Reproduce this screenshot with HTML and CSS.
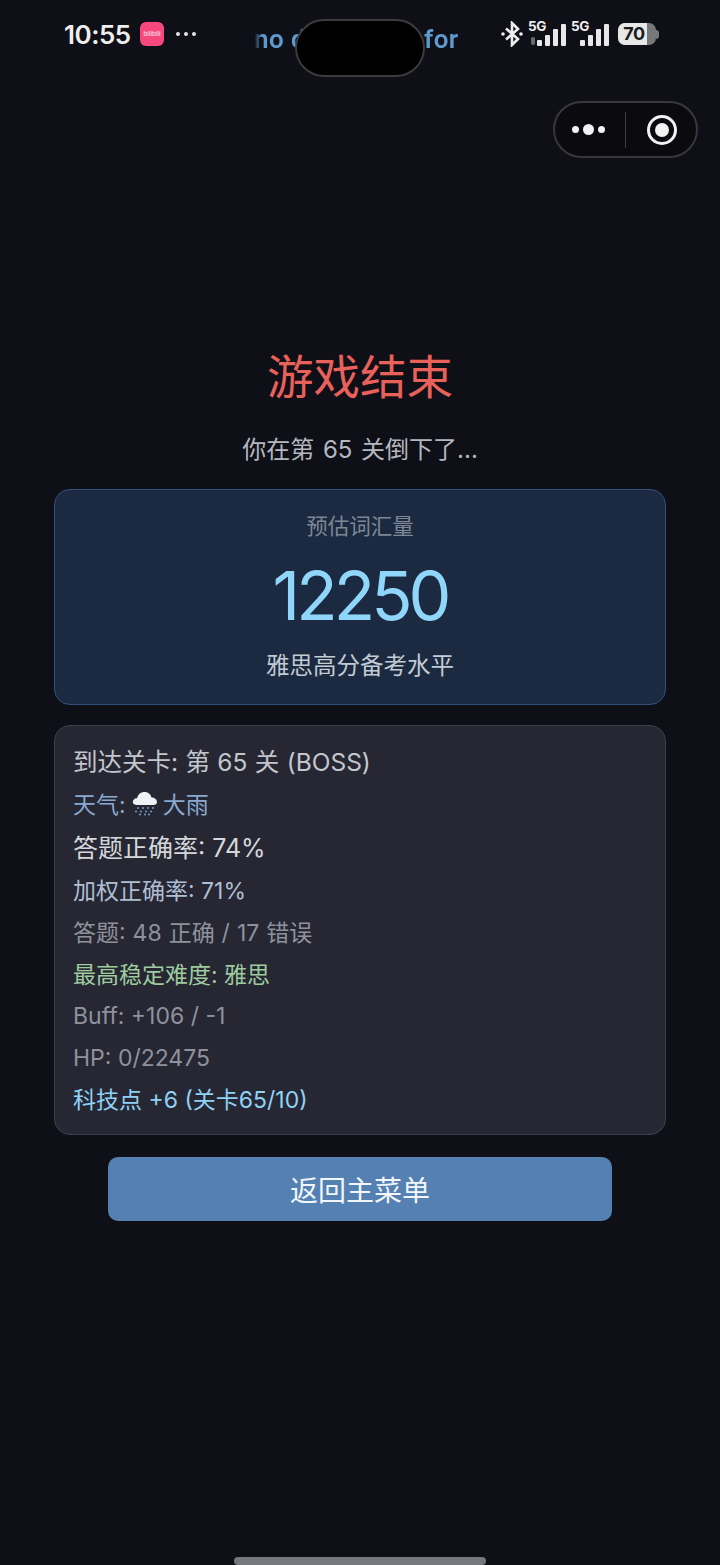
FILE: index.html
```html
<!DOCTYPE html>
<html lang="en">
<head>
    <meta charset="UTF-8">
    <meta name="viewport" content="width=device-width, initial-scale=1.0">
    <title>游戏结束</title>
    <link rel="stylesheet" href="styles.css">
</head>
<body>
    <div class="phone">
        <div class="status-bar">
            <span class="time">10:55</span>
            <span class="app-badge">bilibili</span>
            <span class="more-dots">
                <i></i><i></i><i></i>
            </span>
            <div class="ticker">no <span class="ticker-rest">download for you</span></div>
            <div class="status-icons">
                <svg class="bt-icon" width="24" height="26" viewBox="0 0 24 26">
                    <path d="M6 7.500 L18 18 L12 24 V2 L18 8 L6 18.500" fill="none" stroke="#eeeeee" stroke-width="2.600"/>
                    <circle cx="3" cy="13" r="1.800" fill="#eeeeee"/>
                    <circle cx="21" cy="13" r="1.800" fill="#eeeeee"/>
                </svg>
                <div class="signal">
                    <span class="net-label">5G</span>
                    <span class="updown"></span>
                    <span class="bars"><i class="b1"></i><i class="b2"></i><i class="b3"></i><i class="b4"></i></span>
                </div>
                <div class="signal">
                    <span class="net-label">5G</span>
                    <span class="bars"><i class="b1"></i><i class="b2"></i><i class="b3"></i><i class="b4"></i></span>
                </div>
                <div class="battery">
                    <div class="battery-body"><div class="battery-fill"></div><span>70</span></div>
                    <div class="battery-tip"></div>
                </div>
            </div>
        </div>
        <div class="island"></div>

        <div class="capsule">
            <div class="capsule-dots"><i></i><i class="big"></i><i></i></div>
            <div class="capsule-line"></div>
            <div class="capsule-target"><i></i></div>
        </div>

        <main class="content">
            <h1 class="title">游戏结束</h1>
            <p class="subtitle">你在第 65 关倒下了...</p>

            <section class="vocab-card">
                <div class="vocab-label">预估词汇量</div>
                <div class="vocab-number">12250</div>
                <div class="vocab-level">雅思高分备考水平</div>
            </section>

            <section class="stats-card">
                <div class="row row-main">到达关卡: 第 65 关 (BOSS)</div>
                <div class="row row-weather">
                    <span>天气:</span>
                    <svg class="rain-icon" width="27" height="26" viewBox="0 0 27 26">
                        <path d="M6 15 C2 15 1 12 2.500 10 C3.500 8.500 5 8 6 8.500 C7 4 10 2 13.500 2 C17.500 2 20 4.500 20.500 7.500 C23.500 7.500 26 9.500 26 12 C26 14 24.500 15 22.500 15 Z" fill="#eef1f5"/>
                        <g fill="#6f9fd0">
                            <circle cx="7" cy="18" r="1"/><circle cx="12" cy="18" r="1"/><circle cx="17" cy="18" r="1"/><circle cx="22" cy="18" r="1"/>
                            <circle cx="5" cy="21.500" r="1"/><circle cx="10" cy="21.500" r="1"/><circle cx="15" cy="21.500" r="1"/><circle cx="20" cy="21.500" r="1"/>
                            <circle cx="9" cy="24.500" r="1"/><circle cx="14" cy="24.500" r="1"/><circle cx="18" cy="24.500" r="1"/>
                        </g>
                    </svg>
                    <span>大雨</span>
                </div>
                <div class="row row-accuracy">答题正确率: 74%</div>
                <div class="row row-weighted">加权正确率: 71%</div>
                <div class="row row-muted row-answers">答题: 48 正确 / 17 错误</div>
                <div class="row row-green">最高稳定难度: 雅思</div>
                <div class="row row-muted row-latin">Buff: +106 / -1</div>
                <div class="row row-muted row-latin">HP: 0/22475</div>
                <div class="row row-tech">科技点 +6 (关卡65/10)</div>
            </section>

            <button class="back-btn" type="button">返回主菜单</button>
        </main>

        <div class="home-bar"></div>
    </div>
</body>
</html>
```

FILE: styles.css
```css
* {
    box-sizing: border-box;
}
html, body {
    margin: 0;
    padding: 0;
}
body {
    background-color: #0e0f17;
    font-family: Inter, "Noto Sans CJK SC", "Noto Sans", sans-serif;
    color: #c9ccd4;
}
.phone {
    position: relative;
    width: 720px;
    height: 1565px;
    overflow: hidden;
}

/* status bar */
.status-bar {
    display: flex;
    align-items: center;
    height: 68px;
    padding-left: 64px;
}
.time {
    font-size: 26px;
    font-weight: 600;
    letter-spacing: -0.5px;
    color: #eeeeee;
    width: 76px;
}
.app-badge {
    width: 24px;
    height: 24px;
    margin-right: 12px;
    border-radius: 6px;
    background-color: #f5487f;
    color: #ffe6ee;
    font-family: "Liberation Sans", sans-serif;
    font-size: 7px;
    line-height: 24px;
    text-align: center;
    overflow: hidden;
}
.more-dots {
    display: flex;
    gap: 4px;
    width: 78px;
}
.more-dots i {
    width: 4px;
    height: 4px;
    border-radius: 50%;
    background-color: #e4e4e4;
}
.ticker {
    width: 216px;
    margin-top: 10px;
    overflow: hidden;
    white-space: nowrap;
    font-family: Roboto, "Liberation Sans", sans-serif;
    font-size: 26px;
    font-weight: 600;
    letter-spacing: 0.400px;
    color: #5d9acb;
    -webkit-mask-image: linear-gradient(to right, transparent, #000 8px, #000 206px, transparent);
    mask-image: linear-gradient(to right, transparent, #000 8px, #000 206px, transparent);
}
.ticker-rest {
    word-spacing: 10px;
}
.status-icons {
    display: flex;
    align-items: center;
    margin-left: 30px;
}
.bt-icon {
    margin-right: 4px;
}
.signal {
    position: relative;
    width: 38px;
    height: 24px;
    margin-right: 5px;
}
.net-label {
    position: absolute;
    left: 0;
    top: -4px;
    font-size: 13.500px;
    font-weight: 700;
    letter-spacing: -0.5px;
    color: #eeeeee;
}
.updown {
    position: absolute;
    left: 3px;
    bottom: 1px;
    width: 4px;
    height: 8px;
    background-color: #6a6b71;
    border-radius: 2px;
}
.bars {
    position: absolute;
    right: 0;
    bottom: 0;
    display: flex;
    align-items: flex-end;
    gap: 3px;
}
.bars i {
    width: 5px;
    background-color: #e8e8e8;
    border-radius: 1px;
}
.bars .b1 { height: 6px; }
.bars .b2 { height: 11px; }
.bars .b3 { height: 17px; }
.bars .b4 { height: 22px; }
.battery {
    display: flex;
    align-items: center;
    margin-left: 4px;
}
.battery-body {
    position: relative;
    width: 38px;
    height: 22px;
    border-radius: 7px;
    background-color: #77787c;
    overflow: hidden;
}
.battery-fill {
    width: 76%;
    height: 100%;
    background-color: #e8e8e8;
}
.battery-body span {
    position: absolute;
    left: 0;
    right: 6px;
    top: 0;
    font-size: 18px;
    font-weight: 700;
    line-height: 22px;
    letter-spacing: -0.5px;
    text-align: center;
    color: #1b1b1f;
}
.battery-tip {
    width: 3px;
    height: 9px;
    border-radius: 0 3px 3px 0;
    background-color: #77787c;
}

/* camera cutout, sits over the ticker */
.island {
    position: absolute;
    left: 295px;
    top: 19px;
    width: 130px;
    height: 58px;
    border-radius: 29px;
    background-color: #000000;
    border: 2px solid #3a3a40;
}

/* mini program capsule */
.capsule {
    position: absolute;
    left: 553px;
    top: 101px;
    width: 145px;
    height: 57px;
    display: flex;
    align-items: center;
    border-radius: 29px;
    background-color: #0a0a0f;
    border: 2px solid #37373d;
}
.capsule-dots {
    display: flex;
    align-items: center;
    justify-content: center;
    gap: 4px;
    width: 70px;
    padding-right: 4px;
}
.capsule-dots i {
    width: 7px;
    height: 7px;
    border-radius: 50%;
    background-color: #f2f2f2;
}
.capsule-dots .big {
    width: 11px;
    height: 11px;
}
.capsule-line {
    width: 1px;
    height: 36px;
    background-color: #3d3d42;
}
.capsule-target {
    width: 30px;
    height: 30px;
    margin-left: 21px;
    border-radius: 50%;
    border: 3px solid #f2f2f2;
    display: flex;
    align-items: center;
    justify-content: center;
}
.capsule-target i {
    width: 14px;
    height: 14px;
    border-radius: 50%;
    background-color: #f2f2f2;
}

/* page content */
.content {
    display: flex;
    flex-direction: column;
    align-items: center;
    padding: 272px 54px 0;
}
.title {
    margin: 0;
    font-size: 46.500px;
    font-weight: 400;
    line-height: 74px;
    color: #e8615a;
}
.subtitle {
    margin: 18px 0 21px;
    font-size: 24px;
    line-height: 36px;
    word-spacing: 2px;
    color: #b4b7bf;
}
.vocab-card {
    width: 612px;
    height: 216px;
    padding-top: 20px;
    border-radius: 16px;
    background-color: #1b2a40;
    border: 1px solid #34507a;
    text-align: center;
}
.vocab-label {
    font-size: 21.500px;
    line-height: 32px;
    color: #7d8796;
}
.vocab-number {
    margin-top: 11px;
    font-weight: 400;
    font-size: 68px;
    line-height: 84px;
    letter-spacing: -4px;
    color: #8fd6fa;
}
.vocab-level {
    margin-top: 11px;
    font-size: 23.500px;
    line-height: 36px;
    color: #c3cad4;
}
.stats-card {
    width: 612px;
    height: 410px;
    margin-top: 20px;
    padding: 14px 18px;
    border-radius: 16px;
    background-color: #262733;
    border: 1px solid #3e3f4b;
}
.row {
    display: flex;
    align-items: center;
    gap: 5px;
    height: 42.200px;
    font-size: 23px;
    color: #8f929c;
}
.row-main {
    padding-bottom: 2px;
    font-size: 24.500px;
    word-spacing: 0.500px;
    color: #c4c6cd;
}
.row-weather {
    color: #89a9d0;
}
.rain-icon {
    flex: none;
}
.row-accuracy {
    padding-top: 2px;
    font-size: 25px;
    color: #d5d7dc;
}
.row-weighted {
    padding-top: 2px;
    color: #aebfd4;
}
.row-answers {
    padding-top: 2px;
    word-spacing: 0.500px;
}
.row-green {
    padding-top: 2px;
    color: #9fcb9f;
}
.row-latin {
    padding-top: 4px;
}
.row-tech {
    padding-bottom: 2px;
    color: #8fd2f5;
}
.back-btn {
    width: 504px;
    height: 64px;
    margin-top: 22px;
    border: none;
    border-radius: 10px;
    background-color: #5480b2;
    color: #f2f5f9;
    font-family: inherit;
    font-size: 28px;
}
.home-bar {
    position: absolute;
    left: 234px;
    bottom: 0;
    width: 252px;
    height: 8px;
    border-radius: 4px;
    background-color: #77787e;
}
```
